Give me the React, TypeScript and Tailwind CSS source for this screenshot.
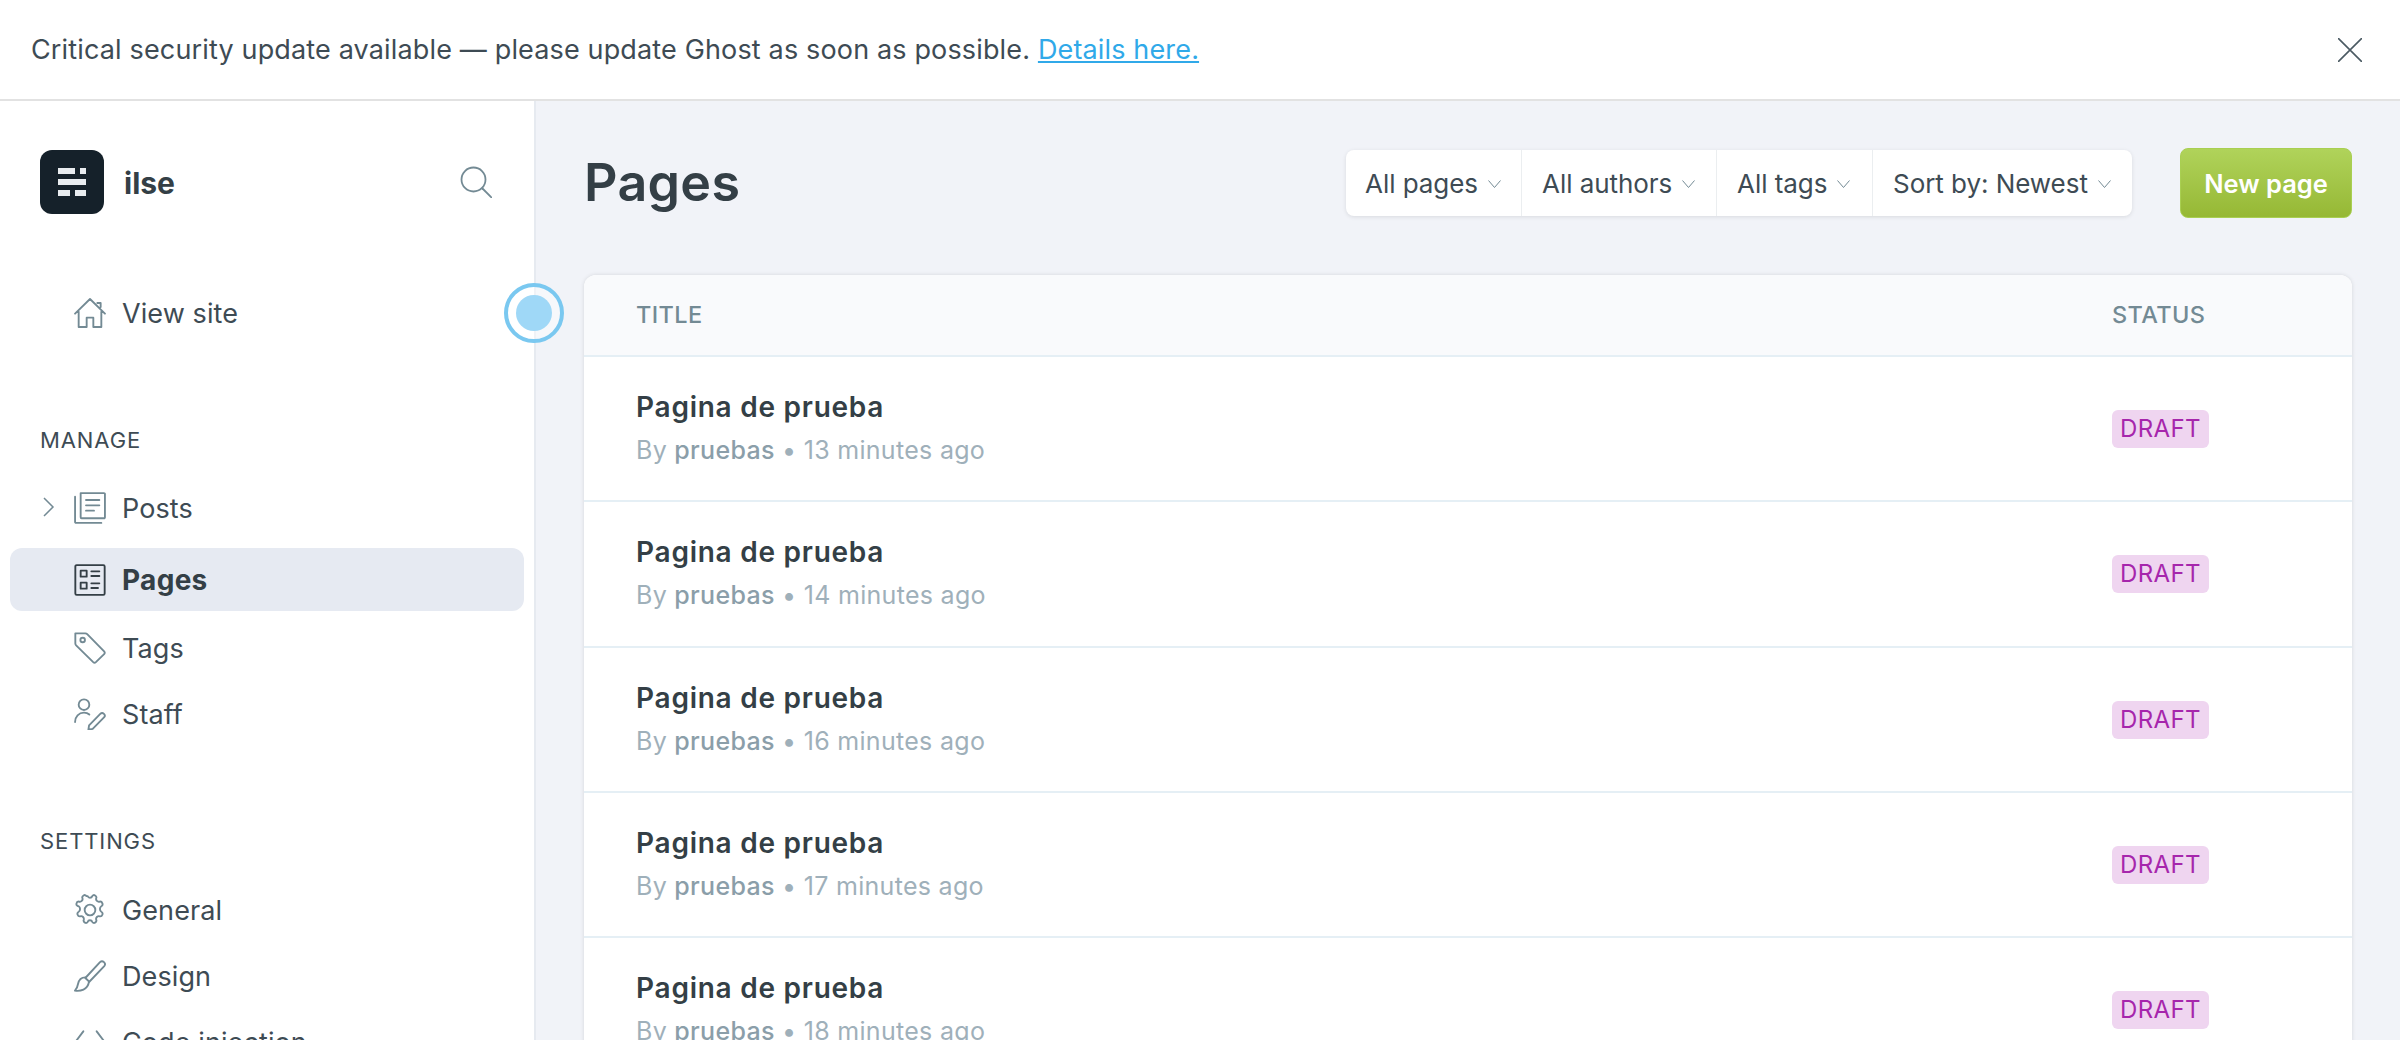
import type { ReactNode } from "react";

const ROWS = ["13", "14", "16", "17", "18", "20"];

function NavIcon({ children, className = "stroke-[#738a94]" }: { children: ReactNode; className?: string }) {
  return (
    <svg viewBox="0 0 24 24" fill="none" strokeWidth="1.4" strokeLinecap="round" strokeLinejoin="round" className={`w-8 h-8 shrink-0 ${className}`}>
      {children}
    </svg>
  );
}

function NavItem({ label, icon, active, caret }: { label: string; icon: ReactNode; active?: boolean; caret?: boolean }) {
  return (
    <div className={`relative flex items-center mx-[10px] pl-[64px] ${active ? "h-[63px] mt-[7px] mb-1 rounded-xl bg-[#e6eaf2] font-bold text-[#343f46] text-[28px] tracking-[0.3px]" : "h-[66px] text-[#3e4b54] text-[27px] tracking-[0.1px]"}`}>
      {caret && (
        <svg viewBox="0 0 12 20" fill="none" className="absolute left-[33px] top-[22px] w-[12px] h-[20px] stroke-[#738a94]" strokeWidth="1.5">
          <path d="M1 1l9 9-9 9" />
        </svg>
      )}
      {icon}
      <span className={`ml-4 ${active ? "" : "pt-[2px]"}`}>{label}</span>
    </div>
  );
}

function SectionLabel({ children, className }: { children: ReactNode; className: string }) {
  return <div className={`h-[30px] pl-[40px] flex items-center text-[22px] tracking-[0.9px] text-[#3e4b54] ${className}`}>{children}</div>;
}

function Filter({ label, width }: { label: string; width: string }) {
  return (
    <div className={`flex items-center pl-5 first:pl-[19px] border-r border-[#ebeef0] last:border-r-0 text-[26px] tracking-[-0.05px] text-[#3e4b54] ${width}`}>
      <span>{label}</span>
      <svg viewBox="0 0 13 8" fill="none" className="ml-[10px] mt-[2px] w-[13px] h-[8px] stroke-[#738a94]" strokeWidth="1">
        <path d="M.5 .5l6 7 6-7" />
      </svg>
    </div>
  );
}

function PageRow({ minutes }: { minutes: string }) {
  return (
    <div className="flex items-center h-[145.33px] border-b-2 border-[#e5eff5] bg-white shrink-0">
      <div className="flex-1 pl-[52px]">
        <div className="text-[28px] leading-[40px] font-semibold text-[#343f46] tracking-[0.75px]">Pagina de prueba</div>
        <div className="mt-[3px] text-[25px] leading-[40px] text-[#9fb0ba] tracking-[0.3px]">
          By <span className="font-medium text-[#8b9ea9]">pruebas</span> • {minutes} minutes ago
        </div>
      </div>
      <div className="w-[240px] pt-[1px]">
        <span className="inline-flex items-center h-[38px] px-2 rounded-md bg-[#efd5f0] text-[#a626ac] text-[24px] tracking-[0.4px]">DRAFT</span>
      </div>
    </div>
  );
}

export default function App() {
  return (
    <div className="relative h-[1040px] w-[2400px] overflow-hidden flex flex-col bg-white font-['Inter',sans-serif]">
      <div className="flex items-center justify-between h-[101px] shrink-0 pl-[31px] pr-[38px] border-b-2 border-[#e2e2e2] text-[27px] tracking-[0.15px] text-[#3e4b54]">
        <p className="pt-[2px]">
          Critical security update available — please update Ghost as soon as possible.{" "}
          <span className="text-[#30a9e9] underline">Details here.</span>
        </p>
        <svg viewBox="0 0 24 24" fill="none" className="w-[24px] h-[24px] stroke-[#4b5a63]" strokeWidth="1.6">
          <path d="M0 0l24 24M24 0L0 24" />
        </svg>
      </div>

      <div className="flex flex-1 min-h-0">
        <aside className="w-[536px] shrink-0 border-r-2 border-[#e6eaf0] pt-[49px] overflow-hidden">
          <div className="flex items-center h-[64px] pl-[40px] pr-[42px]">
            <div className="flex items-center justify-center w-16 h-16 rounded-xl bg-[#15212a]">
              <svg viewBox="0 0 28 28" className="w-[28px] h-[28px] fill-[#e8ecef]">
                <rect x="0" y="0" width="17" height="6" />
                <rect x="22" y="0" width="6" height="6" />
                <rect x="0" y="11" width="28" height="6" />
                <rect x="0" y="22" width="12" height="6" />
                <rect x="17" y="22" width="11" height="6" />
              </svg>
            </div>
            <span className="ml-5 pt-[2px] text-[30px] font-bold text-[#343f46]">ilse</span>
            <svg viewBox="0 0 32 32" fill="none" className="ml-auto w-8 h-8 stroke-[#738a94]" strokeWidth="1.8" strokeLinecap="round">
              <circle cx="13.5" cy="13.5" r="12" />
              <path d="M22.5 22.5l9 9" />
            </svg>
          </div>

          <div className="mt-[66px]">
            <NavItem
              label="View site"
              icon={
                <NavIcon>
                  <path d="M.8 12.500L12 1.500l11.200 11M17.500 4.500h2.500v3M3.500 11v11.500h6V15.500h5v7h6V11" />
                </NavIcon>
              }
            />
          </div>

          <SectionLabel className="mt-[79px]">MANAGE</SectionLabel>
          <div className="mt-5">
            <NavItem
              caret
              label="Posts"
              icon={
                <NavIcon>
                  <path d="M5 .8h17.500a.7.7 0 0 1 .7.7v17.500a.7.7 0 0 1-.7.7H5.700a.7.7 0 0 1-.7-.7V.8zM.8 3.500v19a.7.7 0 0 0 .7.7h19M9 6h10M9 10h10M9 14h6" />
                </NavIcon>
              }
            />
            <NavItem
              active
              label="Pages"
              icon={
                <NavIcon className="stroke-[#343f46]">
                  <rect x="1" y=".8" width="22" height="22.4" rx="1" />
                  <rect x="5" y="5" width="4.5" height="4.5" />
                  <rect x="5" y="14" width="4.5" height="4.5" />
                  <path d="M13 5.500h6M13 9h6M13 14.500h6M13 18h5" />
                </NavIcon>
              }
            />
            <NavItem
              label="Tags"
              icon={
                <NavIcon>
                  <path d="M1 1h7.500a2 2 0 0 1 1.400.6l12.700 13a1.500 1.500 0 0 1 0 2l-6.200 6a1.500 1.500 0 0 1-2 0L1.600 10A2 2 0 0 1 1 8.600z" />
                  <circle cx="6.500" cy="6" r="1.700" />
                </NavIcon>
              }
            />
            <NavItem
              label="Staff"
              icon={
                <NavIcon>
                  <circle cx="7.500" cy="5" r="4" />
                  <path d="M.8 18c0-4 2.800-7 6.700-7 1.500 0 3 .5 4 1.400" />
                  <path d="M14 23.200l-3.200.6.5-3.300 8.400-8.600a1.900 1.900 0 0 1 2.800 2.700z" />
                </NavIcon>
              }
            />
          </div>

          <SectionLabel className="mt-[79px]">SETTINGS</SectionLabel>
          <div className="mt-[21px]">
            <NavItem
              label="General"
              icon={
                <NavIcon>
                  <circle cx="12" cy="12" r="4" />
                  <path d="M10.300 1.600c.4 1.600 2.900 1.600 3.400 0 1-2 3.600.1 3 1.500-.6 1.500 1 3.200 2.600 2.600 1.900-.3 3 2.700 1.200 3.500-1.400.8-1.400 3.200 0 4.100 1.800 1 .7 3.800-1.200 3.400-1.600-.5-3.200 1.100-2.600 2.700.6 1.600-2 3.400-3 1.500-.5-1.600-3-1.600-3.400 0-1 1.900-3.600.1-3-1.500.5-1.600-1-3.200-2.600-2.700-1.900.4-3-2.400-1.200-3.400 1.400-.9 1.400-3.300 0-4.100C.7 8.900 1.800 5.400 3.700 5.700c1.600.6 3.200-1.100 2.600-2.600-.6-1.400 2-3.500 3-1.500z" />
                </NavIcon>
              }
            />
            <NavItem
              label="Design"
              icon={
                <NavIcon>
                  <path d="M8.500 13.500L19.500 1.600a2.200 2.200 0 0 1 3.200 3L11.500 16.300z" />
                  <path d="M8.500 13c-3.500 0-5 2.500-5.500 5-.3 1.800-1 3.800-2.300 5 4 .5 9.500-.5 10.500-6.500" />
                </NavIcon>
              }
            />
            <NavItem
              label="Code injection"
              icon={
                <NavIcon>
                  <path d="M7 4L1 12l6 8M17 4l6 8-6 8" />
                </NavIcon>
              }
            />
          </div>
        </aside>

        <main className="flex-1 min-w-0 bg-[#f1f3f8] pl-[48px] pr-[48px] overflow-hidden">
          <div className="flex items-center h-[174px] pb-[10px]">
            <h1 className="text-[52px] font-semibold text-[#343f46] tracking-[0.3px]">Pages</h1>
            <div className="ml-auto flex h-[66px] rounded-lg bg-white shadow-[0_1px_4px_rgba(0,0,0,0.1)]">
              <Filter label="All pages" width="w-[176px]" />
              <Filter label="All authors" width="w-[195px]" />
              <Filter label="All tags" width="w-[156px]" />
              <Filter label="Sort by: Newest" width="w-[259px]" />
            </div>
            <button className="ml-[48px] w-[172px] h-[70px] pt-[2px] rounded-lg border border-[#a9cf52] bg-gradient-to-b from-[#b0d35a] to-[#96b834] text-white text-[25.5px] font-semibold">
              New page
            </button>
          </div>

          <div className="flex flex-col rounded-t-xl bg-white shadow-[0_0_4px_rgba(0,0,0,0.12)] overflow-hidden">
            <div className="flex items-center h-[82px] shrink-0 border-b-2 border-[#e5eff5] bg-[#f9fafc] text-[23.5px] font-medium tracking-[0.4px] text-[#738a94]">
              <div className="flex-1 pl-[52px]">TITLE</div>
              <div className="w-[240px]">STATUS</div>
            </div>
            {ROWS.map((m) => (
              <PageRow key={m} minutes={m} />
            ))}
          </div>
        </main>
      </div>

      <div className="absolute left-[504px] top-[283px] flex items-center justify-center w-[60px] h-[60px] rounded-full border-4 border-[#7ac8f0] bg-white/40">
        <div className="w-9 h-9 rounded-full bg-[#9fd8f7]" />
      </div>
    </div>
  );
}
